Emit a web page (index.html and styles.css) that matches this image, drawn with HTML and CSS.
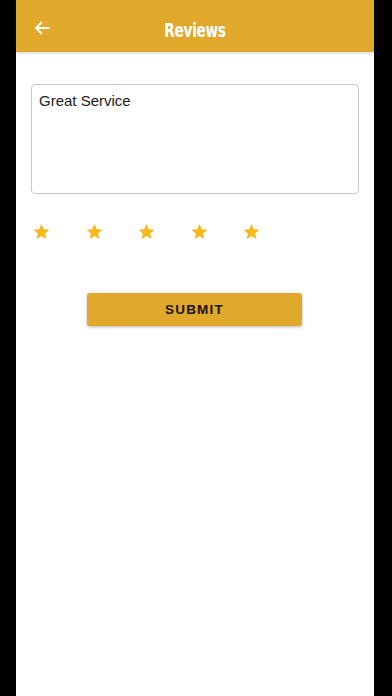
FILE: index.html
```html
<!DOCTYPE html>
<html>
<head>
<meta charset="utf-8">
<link rel="stylesheet" href="styles.css">
</head>
<body>
<div class="frame">
  <div class="screen">
    <header class="appbar">
      <svg class="back" width="16" height="14" viewBox="0 0 16 14"><path d="M15 7H2M7.5 1.5L2 7l5.5 5.5" fill="none" stroke="#fff" stroke-width="1.8" stroke-linecap="round" stroke-linejoin="round"/></svg>
      <h1 class="title">Reviews</h1>
    </header>
    <main class="content">
      <div class="textbox">Great Service</div>
      <div class="stars">
        <svg class="star" viewBox="0 0 24 24"><path d="M12 2.5l2.9 6.6 7.1.6-5.4 4.7 1.6 7-6.2-3.7-6.2 3.7 1.6-7L2 9.7l7.1-.6z"/></svg>
        <svg class="star" viewBox="0 0 24 24"><path d="M12 2.5l2.9 6.6 7.1.6-5.4 4.7 1.6 7-6.2-3.7-6.2 3.7 1.6-7L2 9.7l7.1-.6z"/></svg>
        <svg class="star" viewBox="0 0 24 24"><path d="M12 2.5l2.9 6.6 7.1.6-5.4 4.7 1.6 7-6.2-3.7-6.2 3.7 1.6-7L2 9.7l7.1-.6z"/></svg>
        <svg class="star" viewBox="0 0 24 24"><path d="M12 2.5l2.9 6.6 7.1.6-5.4 4.7 1.6 7-6.2-3.7-6.2 3.7 1.6-7L2 9.7l7.1-.6z"/></svg>
        <svg class="star" viewBox="0 0 24 24"><path d="M12 2.5l2.9 6.6 7.1.6-5.4 4.7 1.6 7-6.2-3.7-6.2 3.7 1.6-7L2 9.7l7.1-.6z"/></svg>
      </div>
      <div class="actions">
        <button class="submit">SUBMIT</button>
      </div>
    </main>
  </div>
</div>
</body>
</html>
```
FILE: styles.css
```css
html, body {
  margin: 0;
  padding: 0;
  background: #000;
}
.frame {
  width: 392px;
  height: 696px;
  display: flex;
  padding-left: 16px;
  box-sizing: border-box;
}
.screen {
  width: 358px;
  height: 696px;
  background: #fff;
  display: flex;
  flex-direction: column;
}
.appbar {
  height: 52px;
  background: #e0a92b;
  display: flex;
  align-items: center;
  position: relative;
  box-shadow: 0 1px 3px rgba(0,0,0,0.2);
}
.back {
  margin-left: 18px;
  margin-top: 4px;
}
.title {
  position: absolute;
  left: 0;
  right: 0;
  top: 4px;
  margin: 0;
  text-align: center;
  line-height: 52px;
  color: #fff;
  font-family: "DejaVu Sans Condensed", "DejaVu Sans", sans-serif;
  font-weight: bold;
  font-size: 20px;
  letter-spacing: -0.4px;
  transform: scaleX(0.76);
  pointer-events: none;
}
.content {
  padding: 32px 15px 0 15px;
  display: flex;
  flex-direction: column;
}
.textbox {
  height: 110px;
  box-sizing: border-box;
  border: 1px solid #c9c9c9;
  border-radius: 4px;
  padding: 7px 7px;
  font-family: "Liberation Sans", Arial, sans-serif;
  font-size: 15px;
  color: #1a1a1a;
  line-height: 18px;
}
.stars {
  display: flex;
  gap: 33.5px;
  margin-top: 28px;
  padding-left: 1px;
}
.star {
  width: 19px;
  height: 19px;
  fill: #f6b81c;
}
.actions {
  display: flex;
  justify-content: center;
  margin-top: 52px;
}
.submit {
  width: 215px;
  height: 33px;
  background: #e0a92b;
  border: none;
  border-radius: 3px;
  box-shadow: 0 1px 3px rgba(0,0,0,0.3);
  font-family: "Liberation Sans", Arial, sans-serif;
  font-weight: bold;
  font-size: 13.5px;
  letter-spacing: 1.2px;
  color: #1c1406;
  padding: 0;
  margin-left: -1px;
}
```
